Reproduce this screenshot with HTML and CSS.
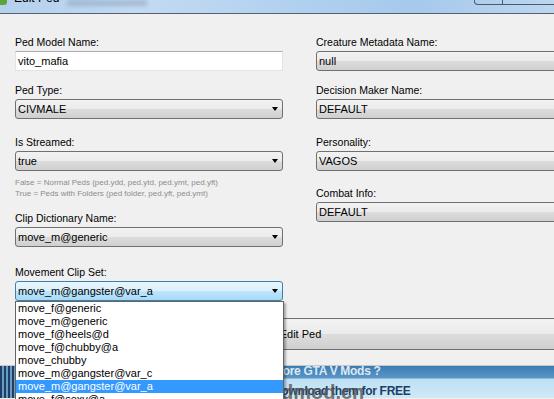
FILE: index.html
```html
<!DOCTYPE html>
<html lang="en">
<head>
    <meta charset="UTF-8">
    <title>Edit Ped</title>
    <link rel="stylesheet" href="styles.css">
</head>
<body>
    <div class="window">
        <div class="titlebar">
            <span class="app-icon"></span>
            <span class="title">Edit Ped</span>
            <span class="title-blur"></span>
            <span class="caption-buttons"></span>
        </div>

        <div class="dialog">
            <div class="columns">
                <div class="column">
                    <div class="field">
                        <label>Ped Model Name:</label>
                        <div class="textbox">vito_mafia</div>
                    </div>
                    <div class="field gap-13">
                        <label>Ped Type:</label>
                        <div class="combo">CIVMALE<span class="arrow"></span></div>
                    </div>
                    <div class="field gap-17">
                        <label>Is Streamed:</label>
                        <div class="combo">true<span class="arrow"></span></div>
                    </div>
                    <div class="hint">
                        False = Normal Peds (ped.ydd, ped.ytd, ped.ymt, ped.yft)<br>
                        True = Peds with Folders (ped folder, ped.yft, ped.ymt)
                    </div>
                    <div class="field gap-13">
                        <label>Clip Dictionary Name:</label>
                        <div class="combo">move_m@generic<span class="arrow"></span></div>
                    </div>
                    <div class="field gap-19">
                        <label>Movement Clip Set:</label>
                        <div class="combo-wrap">
                            <div class="combo focused">move_m@gangster@var_a<span class="arrow"></span></div>
                            <ul class="dropdown-list">
                                <li>move_f@generic</li>
                                <li>move_m@generic</li>
                                <li>move_f@heels@d</li>
                                <li>move_f@chubby@a</li>
                                <li>move_chubby</li>
                                <li>move_m@gangster@var_c</li>
                                <li class="selected">move_m@gangster@var_a</li>
                                <li>move_f@sexy@a</li>
                            </ul>
                        </div>
                    </div>
                </div>

                <div class="column">
                    <div class="field">
                        <label>Creature Metadata Name:</label>
                        <div class="combo">null<span class="arrow"></span></div>
                    </div>
                    <div class="field gap-13">
                        <label>Decision Maker Name:</label>
                        <div class="combo">DEFAULT<span class="arrow"></span></div>
                    </div>
                    <div class="field gap-17">
                        <label>Personality:</label>
                        <div class="combo">VAGOS<span class="arrow"></span></div>
                    </div>
                    <div class="field gap-16">
                        <label>Combat Info:</label>
                        <div class="combo">DEFAULT<span class="arrow"></span></div>
                    </div>
                </div>
            </div>

            <button class="edit-btn">Edit Ped</button>
        </div>
    </div>

    <div class="desktop">
        <div class="desktop-frame"></div>
        <div class="promo">
            <div class="promo-title">More GTA V Mods ?</div>
            <div class="promo-sub">Download them for FREE</div>
        </div>
        <div class="watermark">@www.modmod.cn</div>
    </div>
</body>
</html>
```

FILE: styles.css
```css
html, body {
    margin: 0;
    width: 554px;
    height: 399px;
    overflow: hidden;
}
body {
    font-family: 'Liberation Sans', Arial, sans-serif;
    background-color: #f0f0f0;
    color: #000;
}

/* window chrome */
.window {
    background-color: #f0f0f0;
    border-bottom: 1px solid #c8c8c8;
}
.titlebar {
    height: 13px;
    display: flex;
    align-items: flex-start;
    overflow: hidden;
    border-bottom: 1px solid #56616e;
    background: linear-gradient(90deg, #b4d0ec, #c3daf2 25%, #b0d0ef 55%, #a6c9ec 75%, #bdd6f0);
}
.app-icon {
    width: 7px;
    height: 5px;
    background-color: #5da53a;
    border-radius: 0 0 3px 0;
}
.title {
    margin-left: 7px;
    margin-top: -8px;
    font-size: 12px;
    line-height: 12px;
}
.title-blur {
    width: 80px;
    height: 6px;
    margin-left: 8px;
    background-color: rgba(110, 130, 155, 0.35);
    filter: blur(2px);
}
.caption-buttons {
    margin-left: auto;
    margin-right: -22px;
    width: 100px;
    height: 4px;
    border: 1px solid #4d5a68;
    border-top: none;
    border-radius: 0 0 4px 4px;
    background: linear-gradient(90deg, transparent 27px, #4d5a68 27px, #4d5a68 28px, transparent 28px);
}

/* form */
.dialog {
    padding: 22px 0 15px 15px;
}
.columns {
    display: flex;
    gap: 33px;
}
.column {
    width: 268px;
    flex-shrink: 0;
    display: flex;
    flex-direction: column;
}
.gap-13 { margin-top: 13px; }
.gap-16 { margin-top: 16px; }
.gap-17 { margin-top: 17px; }
.gap-19 { margin-top: 19px; }
.field label {
    display: block;
    font-size: 10.5px;
    line-height: 13px;
    margin-bottom: 2px;
}
.textbox {
    box-sizing: border-box;
    height: 20px;
    padding-left: 2px;
    background-color: #fff;
    border: 1px solid #e2e3ea;
    border-top-color: #abadb3;
    font-size: 11px;
    line-height: 18px;
}
.combo {
    box-sizing: border-box;
    height: 20px;
    display: flex;
    align-items: center;
    padding-left: 2px;
    border: 1px solid #707070;
    border-radius: 3px;
    background: linear-gradient(#f2f2f2, #ebebeb 50%, #dddddd 50%, #cfcfcf);
    font-size: 11px;
}
.combo.focused {
    border-color: #3c7fb1;
    background: linear-gradient(#eaf6fd, #d9f0fc 50%, #bee6fd 50%, #a7d9f5);
}
.arrow {
    margin-left: auto;
    margin-right: 4px;
    border-left: 3.5px solid transparent;
    border-right: 3.5px solid transparent;
    border-top: 4px solid #000;
}
.hint {
    margin-top: 6px;
    font-size: 8px;
    line-height: 11px;
    color: #8c8c8c;
}

/* open list of the clip set combo */
.combo-wrap {
    position: relative;
}
.dropdown-list {
    position: absolute;
    top: 100%;
    left: 0;
    z-index: 2;
    width: 267px;
    margin: 0;
    padding: 0;
    list-style: none;
    background-color: #fff;
    border: 1px solid #646464;
    box-shadow: 2px 2px 2px rgba(0,0,0,0.3);
    font-size: 11px;
}
.dropdown-list li {
    height: 13px;
    line-height: 13px;
    padding-left: 2px;
    white-space: nowrap;
}
.dropdown-list li.selected {
    background-color: #3399ff;
    color: #fff;
}

.edit-btn {
    display: block;
    box-sizing: border-box;
    width: 571px;
    height: 32px;
    margin-top: 17px;
    padding: 0;
    border: 1px solid #707070;
    border-radius: 3px;
    background: linear-gradient(#f2f2f2, #ebebeb 50%, #dddddd 50%, #cfcfcf);
    font-family: inherit;
    font-size: 11px;
    color: #000;
}

/* desktop behind the window */
.desktop {
    position: relative;
    height: 32px;
    display: flex;
    background: linear-gradient(#3c7cb3, #5a96c6 12px, #bfe0f3 13px, #cfe8f6);
}
.desktop-frame {
    width: 15px;
    background: repeating-linear-gradient(90deg, #1d3f66 0, #1d3f66 2px, #6b9cc4 2px, #6b9cc4 4px);
}
.promo {
    padding-left: 258px;
    font-weight: bold;
    font-size: 12px;
    letter-spacing: -0.3px;
}
.promo-title {
    margin-top: -2px;
    line-height: 14px;
    color: #dbe8f2;
}
.promo-sub {
    margin-top: 6px;
    line-height: 14px;
    color: #1b3f66;
}
.watermark {
    position: absolute;
    left: 180px;
    top: 14px;
    font-size: 20px;
    font-weight: bold;
    line-height: 24px;
    color: rgba(85, 85, 85, 0.8);
}
```
